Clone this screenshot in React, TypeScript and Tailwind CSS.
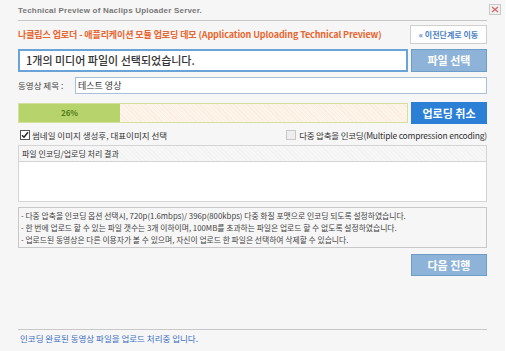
import React from "react";

const KR = "font-['Noto_Sans_CJK_KR','Noto_Sans',sans-serif]";

function CheckBox({ checked }: { checked: boolean }) {
  return (
    <span
      className={`inline-flex w-[10px] h-[10px] items-center justify-center border ${
        checked ? "border-[#555] bg-white" : "border-[#c8c8c8] bg-[#eeeeee]"
      }`}
    >
      {checked && (
        <svg width="8" height="8" viewBox="0 0 8 8">
          <path d="M1 4.2 L3 6.3 L7 1.2" fill="none" stroke="#222" strokeWidth="1.4" />
        </svg>
      )}
    </span>
  );
}

export default function App() {
  return (
    <div className={`w-[506px] h-[351px] bg-[#f6f6f6] ${KR} overflow-hidden flex`}>
      <div className="flex-1 flex flex-col">
        {/* title bar */}
        <div className="h-[20px] flex items-start justify-between pl-[18px] pr-[4px]">
          <span className="font-['Liberation_Sans',sans-serif] text-[8px] font-bold text-[#777] tracking-[0.2px] mt-[5px]">
            Technical Preview of Naclips Uploader Server.
          </span>
          <span className="w-[12px] h-[11px] mt-[4px] border border-[#c9c9c9] bg-[#f0f0f0] flex items-center justify-center">
            <svg width="8" height="7" viewBox="0 0 8 7">
              <path d="M1 1 L7 6 M7 1 L1 6" stroke="#d46a6a" strokeWidth="1.4" />
            </svg>
          </span>
        </div>
        <div className="mx-[18px] h-px bg-[#c8c8c8]" />

        {/* orange heading row */}
        <div className="mx-[18px] mt-[4px] h-[19px] flex items-center justify-between">
          <span className="text-[9px] font-semibold text-[#e8652e] tracking-[-0.1px]">
            나클립스 업로더 - 애플리케이션 모듈 업로딩 데모 (Application Uploading Technical Preview)
          </span>
          <button className="w-[77px] h-[19px] border border-[#cfcfcf] bg-white text-[8px] font-bold text-[#4a7fc7] flex items-center justify-center">
            « 이전단계로 이동
          </button>
        </div>

        {/* file row */}
        <div className="mx-[18px] mt-[5px] flex gap-[3px] h-[23px]">
          <div className="flex-1 border-2 border-[#6aa3d8] bg-white flex items-center pl-[6px]">
            <span className="text-[11px] font-medium text-[#333]">1개의 미디어 파일이 선택되었습니다.</span>
          </div>
          <button className="w-[76px] bg-[#8eb3d8] border border-[#6e9cc9] text-white text-[11px] font-bold">
            파일 선택
          </button>
        </div>

        {/* title row */}
        <div className="mx-[18px] mt-[5px] flex items-center h-[17px]">
          <span className="w-[57px] text-[8.5px] text-[#444]">동영상 제목 :</span>
          <div className="flex-1 h-[17px] border border-[#a9c0d9] bg-white flex items-center pl-[2px]">
            <span className="text-[9px] text-[#333]">테스트 영상</span>
          </div>
        </div>

        {/* progress row */}
        <div className="mx-[18px] mt-[8px] flex gap-[3px] items-center h-[22px]">
          <div className="flex-1 h-[20px] border border-[#d6df9c] bg-[repeating-linear-gradient(45deg,#fdf4ea_0px,#fdf4ea_2px,#fbeee0_2px,#fbeee0_3px)] flex">
            <div className="w-[101px] h-full bg-[#b7d36c] flex items-center justify-center">
              <span className="text-[8px] font-bold text-[#4f7a1a]">26%</span>
            </div>
          </div>
          <button className="w-[76px] h-[22px] bg-[#2b80d6] text-white text-[11px] font-bold">
            업로딩 취소
          </button>
        </div>

        {/* checkbox row */}
        <div className="mx-[18px] mt-[3px] h-[16px] flex items-center justify-between">
          <label className="flex items-center gap-[2px] pl-[2px]">
            <CheckBox checked />
            <span className="text-[8.5px] text-[#333]">썸네일 이미지 생성후, 대표이미지 선택</span>
          </label>
          <label className="flex items-center gap-[3px]">
            <CheckBox checked={false} />
            <span className="text-[8.5px] text-[#333] tracking-[-0.2px]">
              다중 압축을 인코딩(Multiple compression encoding)
            </span>
          </label>
        </div>

        {/* result box */}
        <div className="mx-[18px] mt-[2px] border border-[#d4d4d4] bg-white">
          <div className="h-[16px] border-b border-[#d4d4d4] bg-[repeating-linear-gradient(45deg,#f7f7f7_0px,#f7f7f7_2px,#f2f2f2_2px,#f2f2f2_3px)] flex items-center pl-[3px]">
            <span className="text-[8px] text-[#333]">파일 인코딩/업로딩 처리 결과</span>
          </div>
          <div className="h-[39px]" />
        </div>

        {/* info box */}
        <div className="mx-[18px] mt-[5px] h-[41px] border border-[#c8c8c8] bg-[#f6f6f6] flex flex-col justify-center pl-[2px] text-[7.8px] leading-[12px] text-[#444]">
          <div>- 다중 압축을 인코딩 옵션 선택시, 720p(1.6mbps)/ 396p(800kbps) 다중 화질 포맷으로 인코딩 되도록 설정하였습니다.</div>
          <div>- 한 번에 업로드 할 수 있는 파일 갯수는 3개 이하이며, 100MB를 초과하는 파일은 업로드 할 수 없도록 설정하였습니다.</div>
          <div>- 업로드된 동영상은 다른 이용자가 볼 수 있으며, 자신이 업로드 한 파일은 선택하여 삭제할 수 있습니다.</div>
        </div>

        {/* next button */}
        <div className="mx-[18px] mt-[6px] flex justify-end">
          <button className="w-[76px] h-[22px] bg-[#8eb3d8] border border-[#6e9cc9] text-white text-[11px] font-bold">
            다음 진행
          </button>
        </div>

        <div className="flex-1" />
        <div className="mx-[18px] h-px bg-[#c8c8c8]" />
        <div className="mx-[18px] h-[21px] flex items-center pl-[2px] pb-[4px]">
          <span className="text-[8.5px] text-[#3b6fc2]">인코딩 완료된 동영상 파일을 업로드 처리중 입니다.</span>
        </div>
      </div>
      <div className="w-[1px] bg-white" />
    </div>
  );
}
